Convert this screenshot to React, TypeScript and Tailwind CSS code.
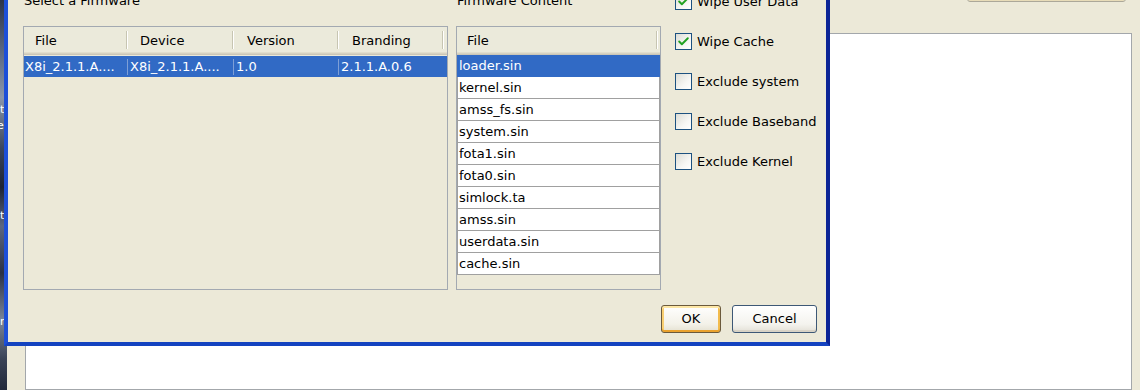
import { Check } from "lucide-react";

const firmwares = [
	{ file: "X8i_2.1.1.A....", device: "X8i_2.1.1.A....", version: "1.0", branding: "2.1.1.A.0.6" },
];

const contentFiles = [
	"loader.sin",
	"kernel.sin",
	"amss_fs.sin",
	"system.sin",
	"fota1.sin",
	"fota0.sin",
	"simlock.ta",
	"amss.sin",
	"userdata.sin",
	"cache.sin",
];

const options = [
	{ label: "Wipe User Data", checked: true },
	{ label: "Wipe Cache", checked: true },
	{ label: "Exclude system", checked: false },
	{ label: "Exclude Baseband", checked: false },
	{ label: "Exclude Kernel", checked: false },
];

function HeaderCell({ title, className }: { title: string; className: string }) {
	return (
		<div className={`relative flex h-full items-center ${className}`}>
			{title}
			<span className="absolute top-[4px] right-0 bottom-[6px] w-[2px] border-l border-r border-l-[#c7c5b2] border-r-white" />
		</div>
	);
}

function XpCheckbox({ checked }: { checked: boolean }) {
	return (
		<span className="flex size-[17px] shrink-0 items-center justify-center border border-[#1c5180] bg-[linear-gradient(135deg,#dcdcd5,#f6f6f3_60%,#ffffff)]">
			{checked && <Check className="size-[13px] text-[#21a121]" strokeWidth={3.5} />}
		</span>
	);
}

export default function App() {
	return (
		<div className="relative flex h-[390px] w-[1140px] overflow-hidden font-['DejaVu_Sans',sans-serif] text-[13px] leading-4 text-black">
			{/* desktop strip */}
			<div className="relative w-[7px] shrink-0 bg-[linear-gradient(to_bottom,#2c3448,#56637c_12%,#8a96aa_25%,#3b465c_38%,#1d2433_48%,#5b6680_58%,#2a3144_70%,#7a8599_82%,#3a4356_92%,#22293a)]">
				<span className="absolute top-[102px] left-0 text-[11px] text-white">t</span>
				<span className="absolute top-[118px] left-[-3px] text-[11px] text-white">el</span>
				<span className="absolute top-[208px] left-0 text-[11px] text-white">t</span>
				<span className="absolute top-[314px] left-0 text-[11px] text-white">r</span>
			</div>

			{/* underlying main window */}
			<div className="flex flex-1 flex-col bg-[#ece9d8] pr-[8px] pl-[18px]">
				<div className="flex h-[33px] shrink-0 justify-end">
					<div className="mt-[-20px] mr-[6px] h-[22px] w-[159px] rounded-b-[3px] border border-[#aca899] bg-[#f5f3ea] shadow-[inset_0_-2px_#e8dcb8]" />
				</div>
				<div className="flex-1 border border-[#a3a7ab] bg-white" />
			</div>

			{/* firmware selector dialog */}
			<div className="absolute top-[-30px] left-[4px] flex h-[376px] w-[826px] flex-col border-x-4 border-b-4 border-l-[#1c4fd8] border-r-[#0b2496] border-b-[#1443c0] bg-[#ece9d8] pt-[23px] pr-[9px] pb-[9px] pl-[15px]">
				<div className="flex items-start">
					{/* Select a Firmware */}
					<div className="flex w-[425px] shrink-0 flex-col">
						<div className="mb-[17px] pl-[1px]">Select a Firmware</div>
						<div className="flex h-[264px] flex-col border border-[#a3a9b1] bg-[#ece9d8]">
							<div className="flex h-[28px] shrink-0 bg-[#ebeadb] shadow-[inset_0_-1px_#cbc7b8,inset_0_-2px_#d6d2c2,inset_0_-3px_#e2decd]">
								<HeaderCell title="File" className="w-[104px] pl-[11px]" />
								<HeaderCell title="Device" className="w-[106px] pl-[12px]" />
								<HeaderCell title="Version" className="w-[105px] pl-[13px]" />
								<HeaderCell title="Branding" className="w-[105px] pl-[13px]" />
							</div>
							{firmwares.map((fw) => (
								<div key={fw.file} className="mt-[1px] flex h-[21px] shrink-0 items-center bg-[#316ac5] text-white">
									<div className="w-[104px] truncate border-r border-[#7e9fd6] pl-[1px]">{fw.file}</div>
									<div className="w-[106px] truncate border-r border-[#7e9fd6] pl-[2px]">{fw.device}</div>
									<div className="w-[105px] truncate border-r border-[#7e9fd6] pl-[2px]">{fw.version}</div>
									<div className="flex-1 truncate pl-[2px]">{fw.branding}</div>
								</div>
							))}
						</div>
					</div>

					{/* Firmware Content */}
					<div className="ml-[8px] flex w-[205px] shrink-0 flex-col">
						<div className="mb-[17px] pl-[1px]">Firmware Content</div>
						<div className="flex h-[264px] flex-col border border-[#a3a9b1] bg-[#ece9d8]">
							<div className="flex h-[28px] shrink-0 bg-[#ebeadb] shadow-[inset_0_-1px_#cbc7b8,inset_0_-2px_#d6d2c2,inset_0_-3px_#e2decd]">
								<HeaderCell title="File" className="w-[201px] pl-[10px]" />
							</div>
							{contentFiles.map((name, i) => (
								<div
									key={name}
									className={`flex h-[22px] shrink-0 items-center border-x border-b pl-[1px] ${
										i === 0
											? "border-[#316ac5] bg-[#316ac5] text-white"
											: "border-[#a0a0a0] bg-white"
									}`}
								>
									{name}
								</div>
							))}
						</div>
					</div>

					{/* Options */}
					<div className="ml-[14px] flex flex-col gap-[23px]">
						{options.map((opt) => (
							<label key={opt.label} className="flex h-[17px] items-center gap-[5px]">
								<XpCheckbox checked={opt.checked} />
								<span>{opt.label}</span>
							</label>
						))}
					</div>
				</div>

				<div className="mt-auto flex justify-end gap-[11px]">
					<button
						type="button"
						className="h-[28px] w-[60px] rounded-[3px] border border-[#6b5a3c] bg-[linear-gradient(to_bottom,#ffffff,#f3f1e8_70%,#e4e0d0)] shadow-[inset_0_2px_#fde7a6,inset_0_-2px_#eaa22e,inset_2px_0_#f9cf72,inset_-2px_0_#f2bb4c]"
					>
						OK
					</button>
					<button
						type="button"
						className="h-[28px] w-[85px] rounded-[3px] border border-[#3d5876] bg-[linear-gradient(to_bottom,#ffffff,#f4f3ee_70%,#e3e0d6)] shadow-[inset_0_-2px_#d8d3c6]"
					>
						Cancel
					</button>
				</div>
			</div>
		</div>
	);
}
